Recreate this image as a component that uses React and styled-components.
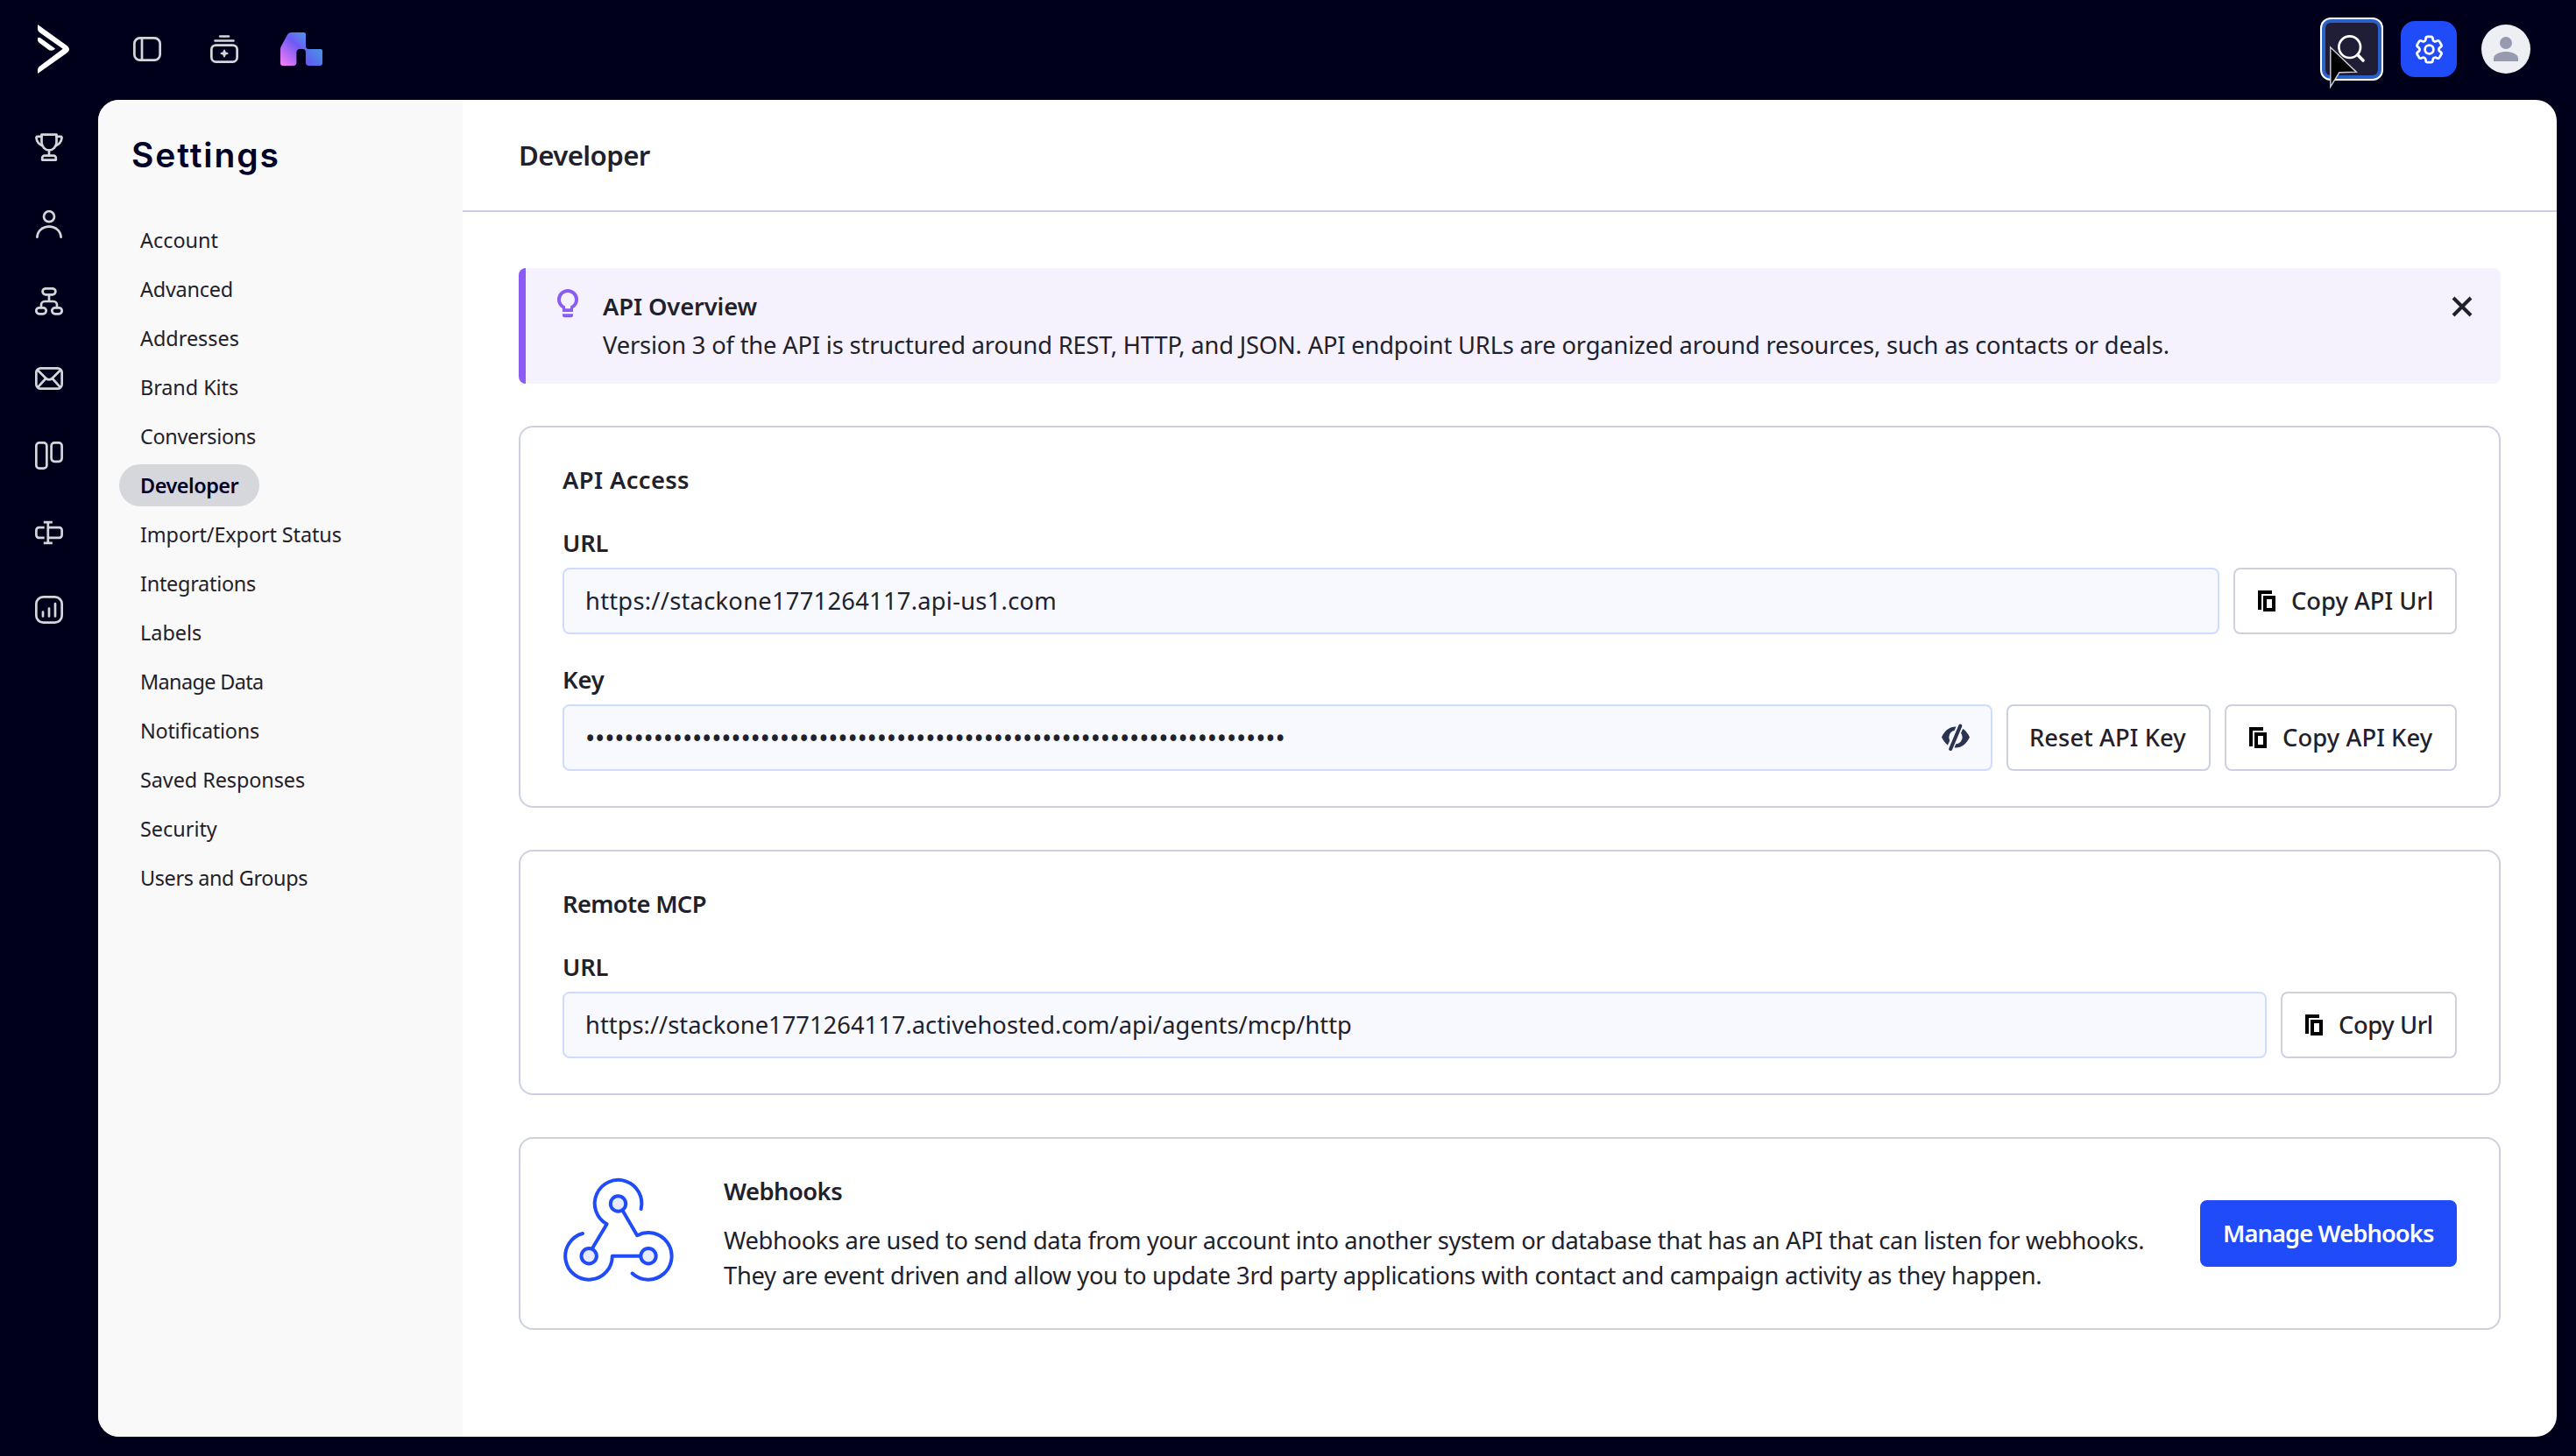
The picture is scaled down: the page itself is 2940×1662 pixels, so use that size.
import React from "react";
import styled, { createGlobalStyle } from "styled-components";
import { HiOutlineCog6Tooth } from "react-icons/hi2";

const GlobalStyle = createGlobalStyle`
  * {
    box-sizing: border-box;
  }
  body {
    margin: 0;
    background: #00001a;
    color: #1f212b;
    font-family: "Noto Sans", sans-serif;
  }
  svg {
    display: block;
    flex-shrink: 0;
  }
`;

const Page = styled.div`
  width: 2940px;
  height: 1662px;
  display: flex;
  flex-direction: column;
  overflow: hidden;
  background: #00001a;
`;

const TopBar = styled.header`
  height: 114px;
  padding: 0 52px 2px 43px;
  display: flex;
  align-items: center;
  justify-content: space-between;
`;

const TopGroup = styled.div`
  display: flex;
  align-items: center;
`;

const TopIcons = styled.div`
  display: flex;
  align-items: center;
  gap: 56px;
  margin: 0 48px 0 73px;
`;

const SearchButton = styled.button`
  width: 60px;
  height: 60px;
  margin-right: 26px;
  padding: 0;
  border: none;
  border-radius: 6px;
  background: #201e36;
  box-shadow: 0 0 0 4px #2b60c9, 0 0 0 6px #fff;
`;

const SettingsButton = styled.button`
  width: 64px;
  height: 64px;
  margin-right: 28px;
  padding: 0;
  display: flex;
  align-items: center;
  justify-content: center;
  border: none;
  border-radius: 16px;
  color: #fff;
  background: #1f4bf9;
  svg {
    stroke-width: 1.7;
  }
`;

const Avatar = styled.div`
  width: 56px;
  height: 56px;
  border-radius: 50%;
  background: #eeeff5;
  overflow: hidden;
`;

const Cursor = styled.svg`
  position: absolute;
  left: 2658px;
  top: 51px;
`;

const Body = styled.div`
  display: flex;
  height: 1526px;
`;

const Rail = styled.nav`
  width: 112px;
  padding-top: 38px;
  display: flex;
  flex-direction: column;
  align-items: center;
  gap: 56px;
`;

const Panel = styled.div`
  width: 2806px;
  display: flex;
  border-radius: 24px;
  overflow: hidden;
  background: #fff;
`;

const Sidebar = styled.aside`
  width: 416px;
  padding-left: 24px;
  background: #f9f9f9;
`;

const SidebarTitle = styled.h1`
  margin: 0 0 10px 14px;
  color: #000028;
  font-family: Inter, sans-serif;
  font-size: 39px;
  font-weight: 600;
  line-height: 126px;
  letter-spacing: 1.9px;
`;

const Menu = styled.div`
  display: flex;
  flex-direction: column;
  align-items: flex-start;
  gap: 8px;
`;

const MenuItem = styled.a`
  padding: 0 24px;
  border-radius: 24px;
  font-size: 23.4px;
  line-height: 48px;
  white-space: nowrap;
  letter-spacing: ${(props) => props.$track || 0}px;
  font-weight: ${(props) => (props.$active ? 600 : 400)};
  color: ${(props) => (props.$active ? "#000028" : "#1f212b")};
  background: ${(props) => (props.$active ? "#d5d7dc" : "transparent")};
`;

const Main = styled.main`
  flex: 1;
`;

const PageHeader = styled.div`
  height: 128px;
  padding-left: 64px;
  border-bottom: 2px solid #cdd0e0;
`;

const PageTitle = styled.h2`
  margin: 0;
  font-size: 31.2px;
  font-weight: 650;
  line-height: 126px;
  letter-spacing: -0.6px;
`;

const Content = styled.div`
  padding: 64px;
  display: flex;
  flex-direction: column;
  gap: 48px;
`;

const Banner = styled.div`
  height: 132px;
  padding: 22px 32px 0 32px;
  display: flex;
  border-left: 8px solid #8a5cf5;
  border-radius: 8px;
  background: #f5f2fe;
  svg:first-child {
    margin-top: 2px;
  }
  svg:last-child {
    margin-top: 10px;
  }
`;

const BannerText = styled.div`
  flex: 1;
  margin-left: 24px;
`;

const Text = styled.p`
  margin: 0;
  font-size: 27.3px;
  line-height: ${(props) => props.$line || 40}px;
  font-weight: ${(props) => props.$weight || 400};
  letter-spacing: ${(props) => props.$track || 0}px;
  white-space: nowrap;
`;

const Card = styled.section`
  padding: 40px 48px;
  border: 2px solid #cdd0e0;
  border-radius: 16px;
`;

const WebhookCard = styled(Card)`
  height: 220px;
  display: flex;
`;

const WebhookText = styled.div`
  flex: 1;
  margin-left: 56px;
  p:first-child {
    margin-bottom: 16px;
  }
`;

const Field = styled.div`
  margin-top: 32px;
`;

const FieldRow = styled.div`
  margin-top: 8px;
  display: flex;
  gap: 16px;
`;

const Input = styled.div`
  flex: 1;
  height: 76px;
  padding: 0 24px;
  display: flex;
  align-items: center;
  justify-content: space-between;
  border: 2px solid #d0dcfd;
  border-radius: 8px;
  background: #f8f9fe;
`;

const Dots = styled.span`
  font-size: 30px;
  letter-spacing: -0.19px;
`;

const Button = styled.button`
  width: ${(props) => props.$width}px;
  height: 76px;
  padding: 0 0 0 24px;
  display: flex;
  align-items: center;
  gap: 16px;
  border: 2px solid ${(props) => (props.$primary ? "#1f4bf9" : "#cdd0e0")};
  border-radius: 8px;
  background: ${(props) => (props.$primary ? "#1f4bf9" : "#fff")};
  color: ${(props) => (props.$primary ? "#fff" : "#1f212b")};
  font-family: inherit;
  font-size: 27.3px;
  font-weight: ${(props) => (props.$primary ? 600 : 550)};
  letter-spacing: ${(props) => props.$track || 0}px;
  white-space: nowrap;
`;

const WebhookButton = styled(Button)`
  align-self: center;
`;

const ButtonLabel = styled.span`
  margin-top: -2px;
`;

const menu = [
  { label: "Account" },
  { label: "Advanced", track: -0.2 },
  { label: "Addresses" },
  { label: "Brand Kits", track: -0.05 },
  { label: "Conversions", track: -0.3 },
  { label: "Developer", track: -0.45, active: true },
  { label: "Import/Export Status", track: -0.1 },
  { label: "Integrations", track: -0.25 },
  { label: "Labels" },
  { label: "Manage Data", track: -0.62 },
  { label: "Notifications", track: -0.25 },
  { label: "Saved Responses", track: -0.06 },
  { label: "Security" },
  { label: "Users and Groups", track: -0.37 },
];

const LineIcon = ({ children }) => (
  <svg
    width="32"
    height="32"
    viewBox="0 0 32 32"
    fill="none"
    stroke="#d5d6da"
    strokeWidth="2.7"
    strokeLinecap="round"
    strokeLinejoin="round"
  >
    {children}
  </svg>
);

const Logo = () => (
  <svg width="36" height="56" viewBox="0 0 36 56" fill="#fff">
    <path d="M0 0L32.6 23.4C35 25.2 36 26.6 36 28.2C36 30 35 31.3 32.6 33L0 56V52C0 50 .8 48.7 2.4 47.5L28.7 27.7L2.4 9.2C.8 8 0 6.8 0 4.8Z" />
    <path d="M0 15.6C.8 14.6 2 14.6 3.4 15.6L20 27.5C17.5 30.3 14.5 30.2 12 28.4L2 21C.7 20 0 19 0 17.3Z" />
  </svg>
);

const AgentLogo = () => (
  <svg width="48" height="38" viewBox="0 0 48 38">
    <defs>
      <linearGradient id="left" gradientUnits="userSpaceOnUse" x1="1" y1="38" x2="33" y2="3">
        <stop offset="0" stopColor="#fb7ff5" />
        <stop offset="0.3" stopColor="#b56cf6" />
        <stop offset="0.62" stopColor="#6f5bf5" />
        <stop offset="1" stopColor="#4a9be6" />
      </linearGradient>
      <linearGradient id="right" gradientUnits="userSpaceOnUse" x1="29" y1="36" x2="48" y2="20">
        <stop offset="0" stopColor="#6257f6" />
        <stop offset="1" stopColor="#4a96e2" />
      </linearGradient>
    </defs>
    <path
      fill="url(#left)"
      d="M13 0H27A2 2 0 0 1 29 2V22.5C29 20.4 27.6 19 25.5 19H22C19.8 19 18.4 20.6 18.4 23V34.5C18.4 36.6 17 38 15 38H3A3 3 0 0 1 0 35V19.4C0 18.2 .3 17 .8 16L8 2.8C9 1 10.6 0 13 0Z"
    />
    <path
      fill="url(#right)"
      d="M28.9 15.5C28.9 17.6 30.2 19 32.2 19H46A2 2 0 0 1 48 21V35A3 3 0 0 1 45 38H32.2C30.2 38 28.9 36.6 28.9 34.5Z"
    />
  </svg>
);

const CopyIcon = () => (
  <svg width="24" height="24" viewBox="0 0 24 24" fill="none" stroke="#000" strokeWidth="4">
    <path d="M4 22V2H18" />
    <path d="M10 8H20V22H10Z" />
  </svg>
);

const EyeOffIcon = () => (
  <svg width="32" height="32" viewBox="0 0 32 32">
    <path
      fill="#2a3350"
      fillRule="evenodd"
      d="M0 15.5C4 7.5 9 3.6 16 3.6S28 7.5 32 15.5C28 23.5 23 27.4 16 27.4S4 23.5 0 15.5ZM16 7.8A7.7 7.7 0 1 0 16 23.2A7.7 7.7 0 1 0 16 7.8Z"
    />
    <path d="M22.5 0L8 32" stroke="#f8f9fe" strokeWidth="8" />
    <path
      d="M21.3 2.6L10.200 29"
      stroke="#2a3350"
      strokeWidth="4"
      strokeLinecap="round"
    />
  </svg>
);

const BulbIcon = () => (
  <svg width="32" height="33" viewBox="0 0 32 33" fill="#8a5cf5">
    <path
      fillRule="evenodd"
      d="M16 0A12 12 0 0 0 4 12C4 16.4 6.2 19.8 10 22V26H22V22C25.8 19.8 28 16.4 28 12A12 12 0 0 0 16 0ZM16 4A8 8 0 0 1 24 12C24 15.6 22.2 17.8 19 19.6V22.2H13V19.6C9.8 17.8 8 15.6 8 12A8 8 0 0 1 16 4Z"
    />
    <path d="M10 28.3H22V30A2.3 2.3 0 0 1 19.7 32.3H12.3A2.3 2.3 0 0 1 10 30Z" />
  </svg>
);

const CloseIcon = () => (
  <svg width="24" height="24" viewBox="0 0 24 24" fill="none" stroke="#1f212b" strokeWidth="4">
    <path d="M2 2L22 22M22 2L2 22" />
  </svg>
);

const WebhookIcon = () => (
  <svg
    width="128"
    height="124"
    viewBox="642 1340 128 124"
    fill="none"
    stroke="#1f4bf9"
    strokeWidth="4"
    strokeLinecap="round"
    strokeLinejoin="round"
  >
    <path d="M731.6 1380A26.8 26.8 0 1 0 692.6 1397.2L676.3 1424.5" />
    <path d="M665 1408A26.8 26.8 0 1 0 698.8 1433.7H731" />
    <path d="M711 1382.5L727.2 1410.2A26.8 26.8 0 1 1 721.6 1453.5" />
    <circle cx="705.5" cy="1374" r="8.7" fill="#e6ecfd" />
    <circle cx="672.2" cy="1433.7" r="8.7" fill="#e6ecfd" />
    <circle cx="740" cy="1433.7" r="8.7" fill="#e6ecfd" />
  </svg>
);

const App = () => {
  return (
    <>
      <GlobalStyle />
      <Page>
        <TopBar>
          <TopGroup>
            <Logo />
            <TopIcons>
              <LineIcon>
                <rect x="1.35" y="3.35" width="29.3" height="25.3" rx="6.5" />
                <path d="M10 3.5V28.5" />
              </LineIcon>
              <LineIcon>
                <path d="M11.2 1.5H21M5.5 6.5H26.5" />
                <rect x="1.35" y="11.6" width="29.3" height="19" rx="5" />
                <path
                  d="M16 17.2L17.1 19.9L19.8 21L17.1 22.1L16 24.8L14.9 22.1L12.2 21L14.9 19.9Z"
                  fill="#d5d6da"
                  strokeWidth="1.5"
                />
              </LineIcon>
            </TopIcons>
            <AgentLogo />
          </TopGroup>
          <TopGroup>
            <SearchButton>
              <svg width="60" height="60" viewBox="0 0 60 60" fill="none" stroke="#fff">
                <circle cx="27.7" cy="27.7" r="12.3" strokeWidth="2.7" />
                <path d="M37 36.8L43 43" strokeWidth="3.6" strokeLinecap="round" />
              </svg>
            </SearchButton>
            <SettingsButton>
              <HiOutlineCog6Tooth size={39} />
            </SettingsButton>
            <Avatar>
              <svg width="56" height="56" viewBox="0 0 56 56" fill="#979bb0">
                <circle cx="28" cy="21" r="7" />
                <path d="M14 42V38.5C14 33.5 22 31 28 31S42 33.5 42 38.5V42Z" />
              </svg>
            </Avatar>
          </TopGroup>
        </TopBar>
        <Body>
          <Rail>
            <LineIcon>
              <path d="M7.5 1.7H24.5V10.5C24.5 15.5 20.5 19.5 16 19.5S7.5 15.5 7.5 10.5Z" />
              <path d="M7.5 3.8H3C1.8 3.8 1.3 4.5 1.5 5.6C2 9.5 4.3 12.5 8.2 14.2M24.5 3.8H29C30.2 3.8 30.7 4.5 30.5 5.6C30 9.5 27.7 12.5 23.8 14.2M16 19.5V25" />
              <path d="M8.2 30.6V28.3A2.6 2.6 0 0 1 10.8 25.7H21.2A2.6 2.6 0 0 1 23.8 28.3V30.6Z" />
            </LineIcon>
            <LineIcon>
              <circle cx="16" cy="7.2" r="6" />
              <path d="M2.4 30.6C2.8 23.6 8.7 18.6 16 18.6S29.2 23.6 29.6 30.6" />
            </LineIcon>
            <LineIcon>
              <rect x="8.6" y="1.3" width="14.8" height="7" rx="3.5" />
              <path d="M16 8.5V16M7 23V20A4 4 0 0 1 11 16H21A4 4 0 0 1 25 20V23" />
              <rect x="1.3" y="23.3" width="11.4" height="7" rx="3.5" />
              <rect x="19.3" y="23.3" width="11.4" height="7" rx="3.5" />
            </LineIcon>
            <LineIcon>
              <rect x="1.35" y="4.35" width="29.3" height="23.3" rx="5" />
              <path d="M3 6.5L11.8 15.2Q16 19.6 20.2 15.2L29 6.5M3.6 25.6L11.4 17M28.4 25.6L20.6 17" />
            </LineIcon>
            <LineIcon>
              <rect x="1.35" y="1.35" width="12" height="29.3" rx="3.5" />
              <rect x="18.6" y="1.35" width="12" height="21.5" rx="3.5" />
            </LineIcon>
            <LineIcon>
              <path
                d="M10.7 10.2H4.4A3 3 0 0 0 1.4 13.2V18.8A3 3 0 0 0 4.4 21.8H10.7M15 10.2H27.6A3 3 0 0 1 30.6 13.2V18.8A3 3 0 0 1 27.6 21.8H15M9.8 4.2H19.8M9.8 27.8H19.8M14.8 4.2V27.8"
                strokeLinecap="butt"
              />
            </LineIcon>
            <LineIcon>
              <rect x="1.35" y="1.35" width="29.3" height="29.3" rx="8" />
              <path d="M9 18.5V23.5M16 14.5V23.5M23 9V23.5" />
            </LineIcon>
          </Rail>
          <Panel>
            <Sidebar>
              <SidebarTitle>Settings</SidebarTitle>
              <Menu>
                {menu.map((item) => (
                  <MenuItem key={item.label} $track={item.track} $active={item.active}>
                    {item.label}
                  </MenuItem>
                ))}
              </Menu>
            </Sidebar>
            <Main>
              <PageHeader>
                <PageTitle>Developer</PageTitle>
              </PageHeader>
              <Content>
                <Banner>
                  <BulbIcon />
                  <BannerText>
                    <Text $weight={570} $line={44} $track={-0.1}>
                      API Overview
                    </Text>
                    <Text $line={44} $track={-0.165}>
                      Version 3 of the API is structured around REST, HTTP, and JSON. API endpoint
                      URLs are organized around resources, such as contacts or deals.
                    </Text>
                  </BannerText>
                  <CloseIcon />
                </Banner>
                <Card>
                  <Text $weight={570} $track={0.4}>
                    API Access
                  </Text>
                  <Field>
                    <Text $weight={570} $track={-0.2}>
                      URL
                    </Text>
                    <FieldRow>
                      <Input>
                        <Text $track={0.26}>https://stackone1771264117.api-us1.com</Text>
                      </Input>
                      <Button $width={255}>
                        <CopyIcon />
                        <ButtonLabel>Copy API Url</ButtonLabel>
                      </Button>
                    </FieldRow>
                  </Field>
                  <Field>
                    <Text $weight={570} $track={-0.2}>
                      Key
                    </Text>
                    <FieldRow>
                      <Input>
                        <Dots>{"•".repeat(72)}</Dots>
                        <EyeOffIcon />
                      </Input>
                      <Button $width={233} $track={0.1}>
                        <ButtonLabel>Reset API Key</ButtonLabel>
                      </Button>
                      <Button $width={265} $track={0.1}>
                        <CopyIcon />
                        <ButtonLabel>Copy API Key</ButtonLabel>
                      </Button>
                    </FieldRow>
                  </Field>
                </Card>
                <Card>
                  <Text $weight={570} $track={-0.65}>
                    Remote MCP
                  </Text>
                  <Field>
                    <Text $weight={570} $track={-0.2}>
                      URL
                    </Text>
                    <FieldRow>
                      <Input>
                        <Text $track={0.02}>
                          https://stackone1771264117.activehosted.com/api/agents/mcp/http
                        </Text>
                      </Input>
                      <Button $width={201} $track={-0.4}>
                        <CopyIcon />
                        <ButtonLabel>Copy Url</ButtonLabel>
                      </Button>
                    </FieldRow>
                  </Field>
                </Card>
                <WebhookCard>
                  <WebhookIcon />
                  <WebhookText>
                    <Text $weight={570} $track={-0.5}>
                      Webhooks
                    </Text>
                    <Text $track={-0.355}>
                      Webhooks are used to send data from your account into another system or
                      database that has an API that can listen for webhooks.
                    </Text>
                    <Text $track={-0.295}>
                      They are event driven and allow you to update 3rd party applications with
                      contact and campaign activity as they happen.
                    </Text>
                  </WebhookText>
                  <WebhookButton $primary $width={293} $track={-0.9}>
                    <ButtonLabel>Manage Webhooks</ButtonLabel>
                  </WebhookButton>
                </WebhookCard>
              </Content>
            </Main>
          </Panel>
        </Body>
        <Cursor width="36" height="54" viewBox="0 0 36 54">
          <path
            d="M1.8 3L31.3 31.2L11.8 31.8L1.8 48Z"
            fill="#000"
            stroke="#d0d0d4"
            strokeWidth="1.4"
          />
        </Cursor>
      </Page>
    </>
  );
};

export default App;
